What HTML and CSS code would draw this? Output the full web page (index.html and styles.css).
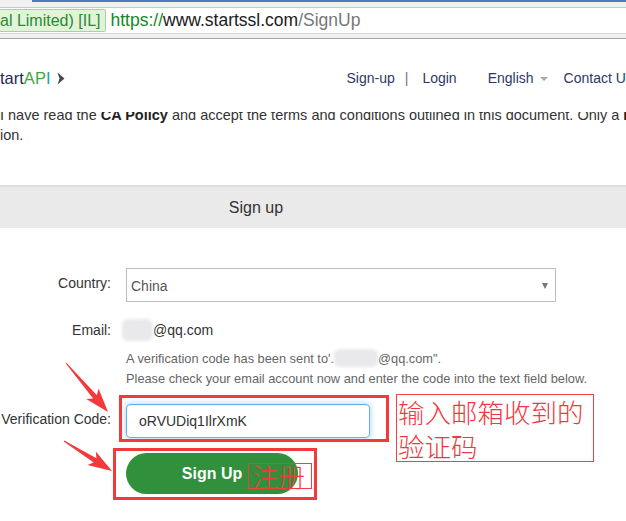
FILE: index.html
```html
<!DOCTYPE html>
<html lang="en">
<head>
<meta charset="utf-8">
<title>StartSSL Sign Up</title>
<link rel="stylesheet" href="styles.css">
</head>
<body>
<div class="page">
  <div class="chrome">
    <div class="chrome-top"></div>
    <div class="urlbar">
      <span class="ev">al Limited) [IL]</span>
      <span class="url"><span class="scheme">https://</span><span class="host">www.startssl.com</span><span class="path">/SignUp</span></span>
    </div>
  </div>

  <header class="site-header">
    <div class="logo">
      <span class="logo-start">Start</span><span class="logo-a">A</span><span class="logo-p">P</span><span class="logo-i">I</span>
      <svg class="chev" width="8" height="13" viewBox="0 0 8 13"><path d="M0.5 0.5 L7.5 6.5 L0.5 12.5 L2.5 6.5 Z" fill="#4a4a4a"/></svg>
    </div>
    <nav class="nav">
      <a class="nav-link">Sign-up</a>
      <span class="nav-sep">|</span>
      <a class="nav-link">Login</a>
      <span class="nav-lang">English <span class="caret"></span></span>
      <a class="nav-link">Contact Us</a>
    </nav>
  </header>

  <div class="terms">
    <p>I have read the <b>CA Policy</b> and accept the terms and conditions outlined in this document. Only a <b>new</b><br>ion.</p>
  </div>

  <div class="bar"><span class="bar-title">Sign up</span></div>

  <form class="form">
    <div class="row row-country">
      <div class="label">Country:</div>
      <div class="select"><span>China</span><span class="select-caret"></span></div>
    </div>
    <div class="row row-email">
      <div class="label">Email:</div>
      <div class="email-val"><span class="blur"></span>@qq.com</div>
    </div>
    <div class="row row-help">
      <div class="label"></div>
      <div class="help">A verification code has been sent to'.<span class="blur blur-sm"></span>@qq.com".<br>Please check your email account now and enter the code into the text field below.</div>
    </div>
    <div class="row row-code">
      <div class="label">Verification Code:</div>
      <div class="input">oRVUDiq1IlrXmK</div>
    </div>
    <div class="row row-btn">
      <div class="label"></div>
      <div class="btn">Sign Up</div>
    </div>
  </form>

  <div class="annot">
    <div class="mark mark-input"></div>
    <div class="mark mark-btn"></div>
    <div class="note note-code">输入邮箱收到的验证码</div>
    <div class="note note-reg">注册</div>
    <svg class="arrows" width="626" height="521" viewBox="0 0 626 521">
      <polygon fill="#f23a3a" points="65.6,363.3 93.1,398.4 86.3,399.0 108,412 98.5,388.6 96.9,395.2 66.4,362.7"/>
      <polygon fill="#f23a3a" points="63.7,441.4 93.7,462.5 87.4,465.1 112,471 95.8,451.5 96.4,458.3 64.3,440.6"/>
    </svg>
  </div>
</div>
</body>
</html>
```

FILE: styles.css
```css
html, body {
  margin: 0;
  padding: 0;
  background: #fff;
}
body {
  width: 626px;
  height: 521px;
  overflow: hidden;
  font-family: "Liberation Sans", Arial, sans-serif;
}
.page {
  position: relative;
  width: 626px;
  height: 521px;
  overflow: hidden;
}

/* browser chrome */
.chrome {
  height: 38px;
  background: #f1f1f1;
  border-bottom: 1px solid #a8a8a8;
}
.chrome-top {
  height: 2px;
  margin-left: 32px;
  background: #4b79c4;
}
.urlbar {
  margin-top: 5px;
  height: 25px;
  background: #fff;
  border-top: 1px solid #c9c9c9;
  border-bottom: 1px solid #d9d9d9;
  display: flex;
  align-items: center;
}
.ev {
  height: 23px;
  line-height: 22px;
  box-sizing: border-box;
  background: #e2f3dc;
  border: 1px solid #a6d39a;
  border-left: none;
  border-radius: 0 2px 2px 0;
  color: #2d8a2d;
  font-size: 16px;
  padding-right: 5px;
  white-space: nowrap;
}
.url {
  margin-left: 4px;
  font-size: 17.5px;
  white-space: nowrap;
}
.scheme { color: #12891f; }
.host { color: #202020; }
.path { color: #777; }

/* site header */
.site-header {
  height: 73px;
  padding-top: 5px;
  box-sizing: border-box;
  display: flex;
  align-items: center;
}
.logo {
  margin-left: -11px;
  font-size: 16.5px;
  display: flex;
  align-items: center;
  white-space: nowrap;
}
.logo-start { color: #1d2b58; }
.logo-a, .logo-p { color: #3ea83a; }
.logo-i { color: #23a3a8; }
.chev { margin-left: 7px; }
.nav {
  margin-left: 281px;
  display: flex;
  align-items: center;
  font-size: 14px;
  color: #2e3866;
  white-space: nowrap;
}
.nav-sep {
  margin: 0 14px 0 10px;
  color: #7d6a8a;
}
.nav-lang {
  margin-left: 31px;
  margin-right: 16px;
  display: flex;
  align-items: center;
}
.caret {
  display: inline-block;
  margin-left: 6px;
  margin-top: 2px;
  width: 0;
  height: 0;
  border-left: 4px solid transparent;
  border-right: 4px solid transparent;
  border-top: 4px solid #aaa;
}

/* terms paragraph (partly under the header) */
.terms {
  height: 36px;
  overflow: hidden;
}
.terms p {
  margin: -7px 0 0 0;
  font-size: 14.5px;
  line-height: 20px;
  color: #333;
  white-space: nowrap;
}
.terms b { color: #222; }

/* sign up bar */
.bar {
  margin-top: 37px;
  height: 41px;
  background: #eaeaea;
  border-top: 2px solid #dedede;
  display: flex;
  align-items: center;
}
.bar-title {
  width: 512px;
  text-align: center;
  font-size: 16px;
  color: #333;
}

/* form */
.form {
  margin: 40px 0 0 0;
  display: flex;
  flex-direction: column;
}
.row {
  display: flex;
  align-items: center;
}
.label {
  width: 111px;
  flex: none;
  display: flex;
  justify-content: flex-end;
  margin-right: 15px;
  font-size: 14px;
  color: #333;
  white-space: nowrap;
}
.row-country .label,
.row-code .label {
  margin-bottom: 5px;
}
.select {
  width: 430px;
  height: 34px;
  box-sizing: border-box;
  border: 1px solid #bdbdbd;
  display: flex;
  align-items: center;
  justify-content: space-between;
  padding: 2px 7px 0 4px;
  font-size: 14px;
  color: #555;
}
.select-caret {
  width: 0;
  height: 0;
  border-left: 3.5px solid transparent;
  border-right: 3.5px solid transparent;
  border-top: 6px solid #777;
}
.row-email {
  margin-top: 18px;
  height: 20px;
}
.email-val {
  display: flex;
  align-items: center;
  font-size: 14px;
  color: #333;
  margin-left: -4px;
}
.blur {
  display: inline-block;
  width: 31px;
  height: 22px;
  background: #e9e9eb;
  border-radius: 6px;
  filter: blur(1.5px);
}
.blur-sm {
  width: 44px;
  height: 18px;
  vertical-align: middle;
  margin-top: -3px;
}
.row-help {
  margin-top: 9px;
}
.help {
  font-size: 12.8px;
  line-height: 20px;
  color: #666;
  white-space: nowrap;
}
.row-code {
  margin-top: 15px;
}
.input {
  width: 244px;
  height: 34px;
  box-sizing: border-box;
  border: 1px solid #66afe9;
  border-radius: 4px;
  box-shadow: inset 0 1px 1px rgba(0,0,0,.075), 0 0 6px rgba(102,175,233,.6);
  display: flex;
  align-items: center;
  padding-left: 12px;
  font-size: 14px;
  color: #333;
}
.row-btn {
  margin-top: 15px;
}
.btn {
  width: 172px;
  height: 41px;
  border-radius: 21px;
  background: #30903b;
  color: #fff;
  font-weight: bold;
  font-size: 16px;
  display: flex;
  align-items: center;
  justify-content: center;
}

/* annotations drawn over the screenshot */
.annot {
  position: absolute;
  left: 0;
  top: 0;
  width: 626px;
  height: 521px;
  pointer-events: none;
}
.mark {
  position: absolute;
  box-sizing: border-box;
  border: 3px solid #f23a3a;
}
.mark-input {
  left: 119px;
  top: 395px;
  width: 270px;
  height: 47px;
}
.mark-btn {
  left: 113px;
  top: 448px;
  width: 204px;
  height: 52px;
}
.note {
  position: absolute;
  box-sizing: border-box;
  border: 1px solid #f04040;
  color: #f0393f;
  font-family: "Noto Sans CJK SC", sans-serif;
  font-weight: 300;
  font-size: 26.5px;
}
.note-code {
  left: 396px;
  top: 394px;
  width: 198px;
  height: 68px;
  line-height: 34px;
  padding-left: 1px;
}
.note-reg {
  left: 248px;
  top: 463px;
  width: 64px;
  height: 26px;
  line-height: 24px;
  padding-left: 3px;
  white-space: nowrap;
}
.arrows {
  position: absolute;
  left: 0;
  top: 0;
}
```
